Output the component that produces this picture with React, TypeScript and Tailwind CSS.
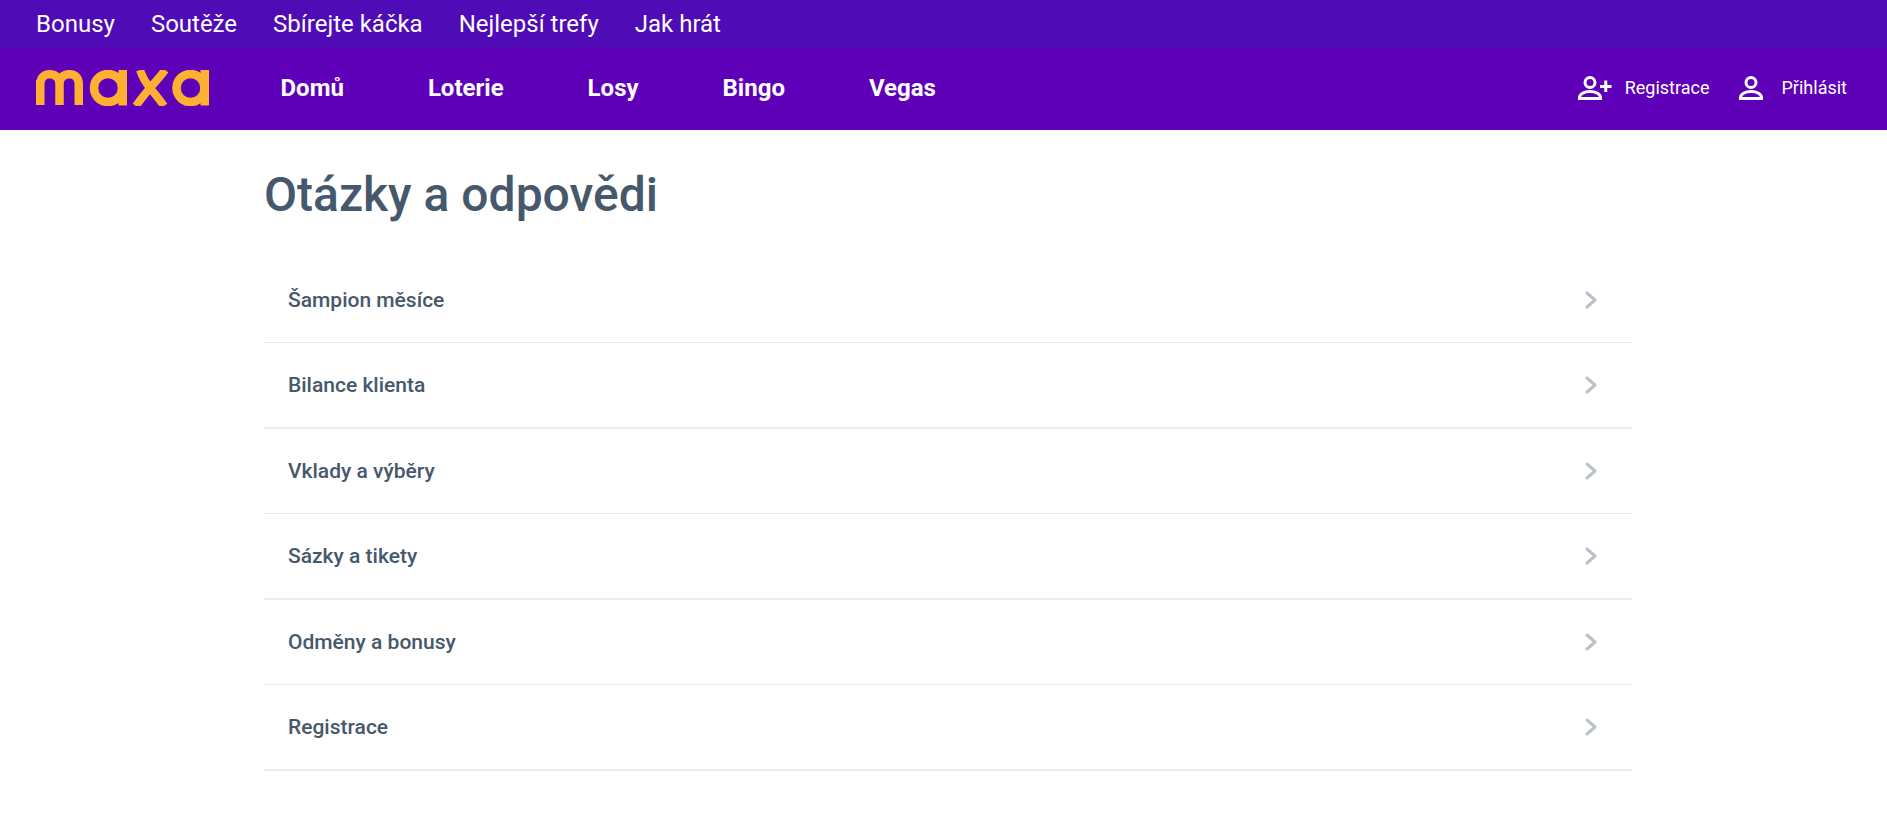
const topLinks = ["Bonusy", "Soutěže", "Sbírejte káčka", "Nejlepší trefy", "Jak hrát"];
const mainLinks = ["Domů", "Loterie", "Losy", "Bingo", "Vegas"];
const faqItems = [
  "Šampion měsíce",
  "Bilance klienta",
  "Vklady a výběry",
  "Sázky a tikety",
  "Odměny a bonusy",
  "Registrace",
];

const Logo = () => (
  <svg width="173" height="36" viewBox="0 0 173 36" fill="none" stroke="#ffb032" strokeWidth="8.500">
    <path d="M4.250 35V10M4.250 14C4.250 8 8 4.250 13.500 4.250C20 4.250 23.500 8 23.500 14V35M23.500 14C23.500 8 27 4.250 33.500 4.250C39.500 4.250 42.750 8 42.750 14V35" />
    <circle cx="72" cy="18" r="14" />
    <path d="M86.750 0V35.500" />
    <path d="M104 0C106 6 109 12 114 18C119 24 124 30 128 36M129 0C125 6 119 12 114 18C109 24 104 30 100 36" strokeWidth="8" />
    <circle cx="154.500" cy="18" r="14" />
    <path d="M168.750 0V35.500" />
  </svg>
);

const UserIcon = () => (
  <svg width="24" height="24" viewBox="0 0 24 24" fill="none" stroke="white" strokeWidth="3">
    <circle cx="12" cy="6.500" r="5" />
    <path d="M1.500 22.500V21.500C1.500 18 6 15.500 12 15.500C18 15.500 22.500 18 22.500 21.500V22.500Z" />
  </svg>
);

const UserPlusIcon = () => (
  <svg width="34" height="24" viewBox="0 0 34 24" fill="none" stroke="white" strokeWidth="3">
    <circle cx="12" cy="6.500" r="5" />
    <path d="M1.500 22.500V21.500C1.500 18 6 15.500 12 15.500C18 15.500 22.500 18 22.500 21.500V22.500Z" />
    <path d="M22 10.500H33.500M27.750 4.500V16" />
  </svg>
);

const Chevron = () => (
  <svg width="12" height="18" viewBox="0 0 12 18" fill="none" stroke="#bac1c8" strokeWidth="3" strokeLinecap="round" strokeLinejoin="round">
    <path d="M2 2L10 9L2 16" />
  </svg>
);

export default function App() {
  return (
    <div className="min-h-[816px] bg-white font-['Roboto',sans-serif]">
      <header>
        <nav className="flex h-[47px] items-center gap-9 bg-[#4f0bb6] pl-9 text-2xl text-white">
          {topLinks.map((link) => (
            <a key={link}>{link}</a>
          ))}
        </nav>
        <div className="flex h-[83px] items-center bg-[#5e00b8] pb-0.5 pl-9 pr-10 text-white">
          <Logo />
          <div className="ml-[71.5px] flex gap-[84px] text-2xl font-bold">
            {mainLinks.map((link) => (
              <a key={link}>{link}</a>
            ))}
          </div>
          <div className="ml-auto flex items-center text-lg">
            <UserPlusIcon />
            <span className="ml-[13px]">Registrace</span>
            <span className="ml-[29px]"><UserIcon /></span>
            <span className="ml-[19px]">Přihlásit</span>
          </div>
        </div>
      </header>
      <main className="ml-[264px] w-[1368px]">
        <h1 className="pt-[30px] pb-[28px] text-5xl leading-[70px] font-medium text-[#46586b]">Otázky a odpovědi</h1>
        {faqItems.map((item, i) => (
          <a
            key={item}
            className={
              i % 2 === 0
                ? "flex h-[85px] items-center justify-between border-b border-[#e8ebef] pr-[35px] pl-6 text-[21px] font-medium text-[#46586b]"
                : "flex h-[86px] items-center justify-between border-b-2 border-[#e8ebef] pr-[35px] pl-6 text-[21px] font-medium text-[#46586b]"
            }
          >
            <span className="pt-0.5">{item}</span>
            <Chevron />
          </a>
        ))}
      </main>
    </div>
  );
}
